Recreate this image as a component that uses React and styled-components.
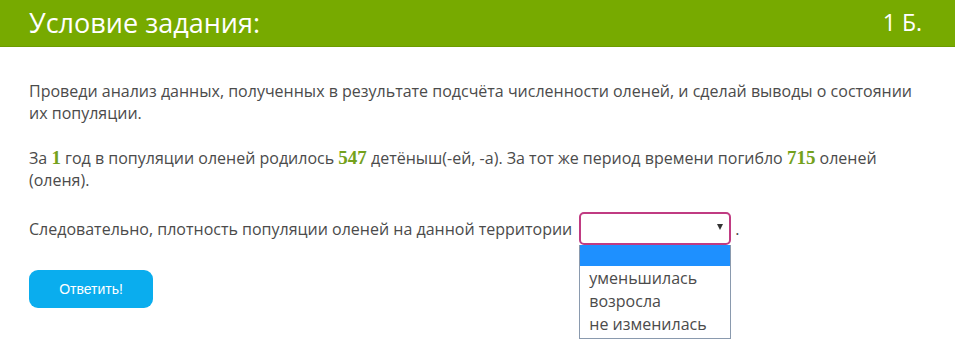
import styled, { createGlobalStyle } from "styled-components";

const GlobalStyle = createGlobalStyle`
  body {
    margin: 0;
    background: #fff;
    font-family: "Open Sans", "Liberation Sans", sans-serif;
  }
`

const Page = styled.div`
  width: 955px;
  height: 339px;
  overflow: hidden;
`

const Header = styled.div`
  height: 46px;
  background: #77aa00;
  border-bottom: 1px solid #6c9c00;
  display: flex;
  align-items: center;
  justify-content: space-between;
  padding: 0 33px 0 29px;
  color: #fff;
`

const Title = styled.h1`
  margin: 0 0 2px;
  font-size: 27px;
  font-weight: 400;
`

const Score = styled.span`
  font-size: 23px;
  margin-bottom: 2px;
`

const Content = styled.div`
  width: 895px;
  padding: 33px 0 0 29px;
  color: #4b4b4b;
  font-size: 16px;
  line-height: 22px;
`

const Para = styled.p`
  margin: 0 0 ${({gap}) => gap || 23}px;
`

const Num = styled.span`
  font-family: "Liberation Serif", "DejaVu Serif", serif;
  font-weight: 700;
  font-size: 19px;
  line-height: 22px;
  color: #74a11c;
`

const AnswerRow = styled.div`
  display: flex;
  align-items: center;
  height: 33px;
`

const SelectWrap = styled.div`
  position: relative;
  margin-left: 7px;
  margin-right: 4px;
`

const SelectBox = styled.div`
  width: 148px;
  height: 29px;
  border: 2px solid #c03b82;
  border-radius: 5px;
  background: #fff;
  position: relative;
`

const Arrow = styled.span`
  position: absolute;
  right: 6px;
  top: 10px;
  width: 0;
  height: 0;
  border-left: 3px solid transparent;
  border-right: 3px solid transparent;
  border-top: 6px solid #333;
`

const Options = styled.ul`
  position: absolute;
  top: 33px;
  left: 0;
  width: 150px;
  margin: 0;
  padding: 0 0 2px;
  list-style: none;
  border: 1px solid #8a9aae;
  border-top: none;
  background: #fff;
  color: #4b4b4b;
  font-size: 16px;
`

const Option = styled.li`
  height: ${({blank}) => blank ? '21px' : '23px'};
  line-height: 23px;
  padding: 0 9px;
  background: ${({active}) => active ? '#1e90ff' : 'transparent'};
  margin-bottom: ${({blank}) => blank ? '1px' : '0'};
`

const Button = styled.button`
  display: block;
  margin-top: 25px;
  width: 124px;
  height: 38px;
  border: none;
  border-radius: 9px;
  background: #0aadee;
  color: #fff;
  font-family: "Liberation Sans", Arial, sans-serif;
  font-size: 14px;
  cursor: pointer;
`

export default function App() {
  return (
    <Page>
      <GlobalStyle />
      <Header>
        <Title>Условие задания:</Title>
        <Score>1 Б.</Score>
      </Header>
      <Content>
        <Para>
          Проведи анализ данных, полученных в результате подсчёта численности оленей, и сделай выводы о состоянии их популяции.
        </Para>
        <Para gap={21}>
          За <Num>1</Num> год в популяции оленей родилось <Num>547</Num> детёныш(-ей, -а). За тот же период времени погибло <Num>715</Num> оленей (оленя).
        </Para>
        <AnswerRow>
          Следовательно, плотность популяции оленей на данной территории
          <SelectWrap>
            <SelectBox>
              <Arrow />
            </SelectBox>
            <Options>
              <Option active blank />
              <Option>уменьшилась</Option>
              <Option>возросла</Option>
              <Option>не изменилась</Option>
            </Options>
          </SelectWrap>
          .
        </AnswerRow>
        <Button>Ответить!</Button>
      </Content>
    </Page>
  );
}
